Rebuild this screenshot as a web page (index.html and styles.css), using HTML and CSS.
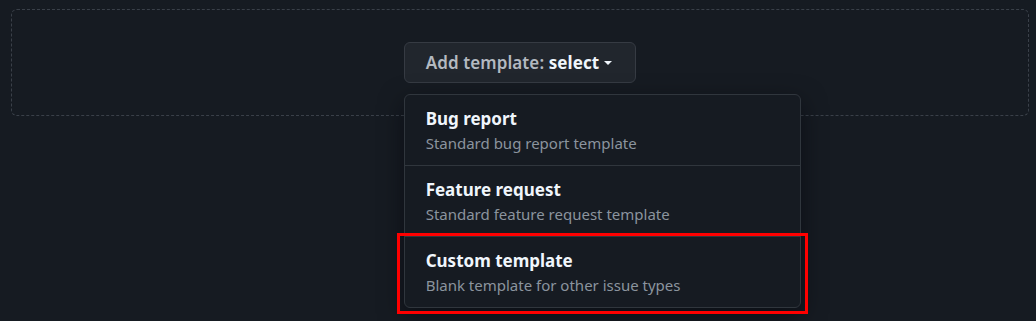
FILE: index.html
```html
<!DOCTYPE html>
<html>
<head>
<meta charset="utf-8">
<link rel="stylesheet" href="styles.css">
</head>
<body>
<div class="page">
  <div class="dropzone">
    <div class="picker">
      <button class="btn"><span class="label">Add template:&nbsp;</span><span class="value">select</span><span class="caret"></span></button>
      <div class="menu">
        <div class="item">
          <div class="title">Bug report</div>
          <div class="desc">Standard bug report template</div>
        </div>
        <div class="item">
          <div class="title">Feature request</div>
          <div class="desc">Standard feature request template</div>
        </div>
        <div class="item highlighted">
          <div class="title">Custom template</div>
          <div class="desc">Blank template for other issue types</div>
          <div class="mark"></div>
        </div>
      </div>
    </div>
  </div>
</div>
</body>
</html>
```
FILE: styles.css
```css
html, body {
  margin: 0;
  padding: 0;
  background: #161b22;
  height: 100%;
  overflow: hidden;
}
body {
  font-family: "Noto Sans", "Open Sans", sans-serif;
  color: #e6edf3;
}
.page {
  padding: 9px 7px 0 11px;
}
.dropzone {
  border: 1px dashed #3a4049;
  border-radius: 6px;
  display: flex;
  justify-content: center;
  align-items: flex-start;
  padding-top: 32px;
  box-sizing: border-box;
  height: 107px;
}
.picker {
  position: relative;
}
.btn {
  display: flex;
  align-items: center;
  height: 41px;
  padding: 0 23px 0 21px;
  background: #21262d;
  border: 1px solid #363b43;
  border-radius: 6px;
  font-family: inherit;
  font-size: 17px;
  font-weight: 600;
  color: #c9d1d9;
  letter-spacing: 0.1px;
}
.btn .label {
  color: #b3b9c0;
}
.btn .value {
  color: #f0f6fc;
  font-weight: 700;
}
.caret {
  display: inline-block;
  width: 0;
  height: 0;
  margin-left: 5px;
  border-left: 4px solid transparent;
  border-right: 4px solid transparent;
  border-top: 4px solid #f0f6fc;
}
.menu {
  position: absolute;
  left: 0;
  top: 52px;
  width: 397px;
  box-sizing: border-box;
  background: #161b22;
  border: 1px solid #30363d;
  border-radius: 6px;
  box-shadow: 0 8px 24px rgba(1, 4, 9, 0.5);
  z-index: 2;
}
.item {
  position: relative;
  height: 71px;
  box-sizing: border-box;
  padding: 12px 21px 0;
  border-top: 1px solid #30363d;
}
.item:first-child {
  border-top: none;
  height: 70px;
}
.title {
  font-size: 17px;
  font-weight: 700;
  color: #f0f6fc;
  line-height: 24px;
}
.desc {
  font-size: 15px;
  color: #8b949e;
  line-height: 20px;
  margin-top: 2px;
}
.mark {
  position: absolute;
  left: -8px;
  right: -8px;
  top: -4px;
  bottom: -7px;
  border: 3px solid #f00;
  pointer-events: none;
}
```
